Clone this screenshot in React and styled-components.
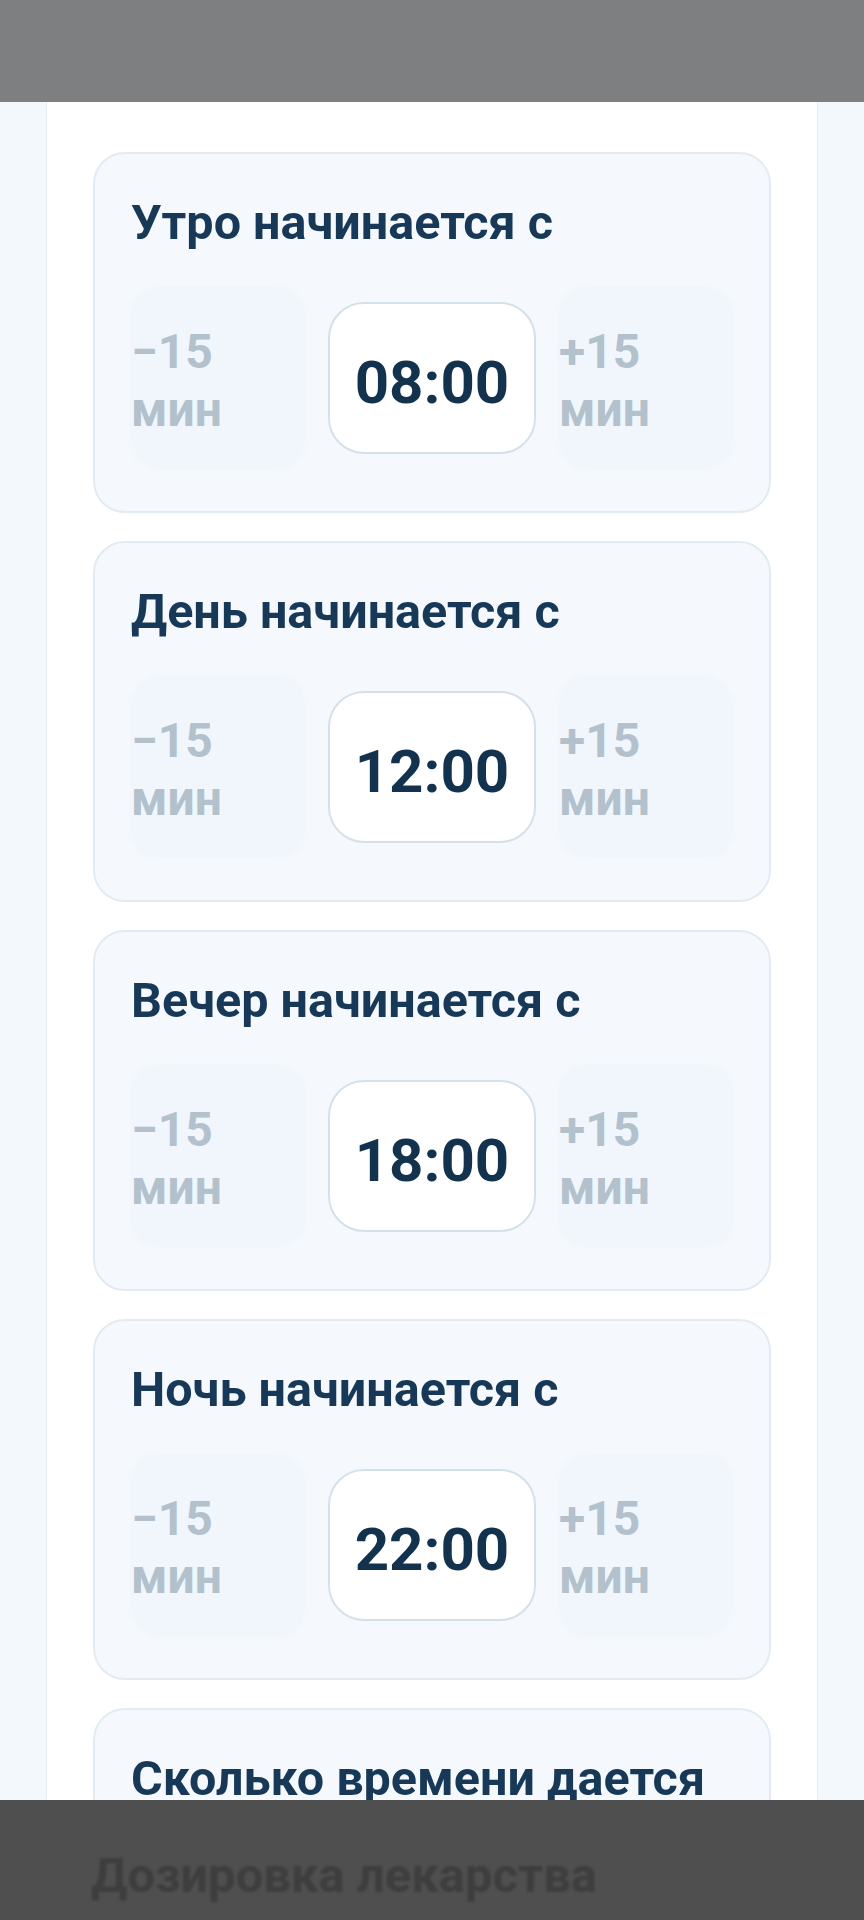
import React from "react";
import styled, { createGlobalStyle } from "styled-components";

const periods = [
  { label: "Утро начинается с", time: "08:00" },
  { label: "День начинается с", time: "12:00" },
  { label: "Вечер начинается с", time: "18:00" },
  { label: "Ночь начинается с", time: "22:00" },
];

function Stepper({ time }) {
  return (
    <StepRow>
      <StepButton type="button">
        −15
        <br />
        мин
      </StepButton>
      <TimeBox>{time}</TimeBox>
      <StepButton type="button">
        +15
        <br />
        мин
      </StepButton>
    </StepRow>
  );
}

export default function App() {
  return (
    <>
      <GlobalStyle />
      <Screen>
        <StatusShade />
        <Panel>
          {periods.map((period) => (
            <Card key={period.label}>
              <Title>{period.label}</Title>
              <Stepper time={period.time} />
            </Card>
          ))}
          <Card>
            <Title>Сколько времени дается</Title>
          </Card>
        </Panel>
        <BottomShade>
          <ShadeText>Дозировка лекарства</ShadeText>
        </BottomShade>
      </Screen>
    </>
  );
}

const GlobalStyle = createGlobalStyle`
  * {
    box-sizing: border-box;
  }
  body {
    margin: 0;
    background: #f3f8fd;
    font-family: Roboto, "Noto Sans", sans-serif;
  }
`;

const Screen = styled.div`
  position: relative;
  height: 100vh;
  display: flex;
  flex-direction: column;
  overflow: hidden;
`;

const StatusShade = styled.div`
  flex: 0 0 102px;
  background: #7e7f80;
`;

const Panel = styled.main`
  flex: 1;
  width: 772px;
  margin: 0 auto;
  padding: 50px 46px 0;
  display: flex;
  flex-direction: column;
  gap: 28px;
  background: #ffffff;
  border-left: 1px solid #e6edf4;
  border-right: 1px solid #e6edf4;
`;

const Card = styled.section`
  flex-shrink: 0;
  padding: 42px 36px;
  background: #f5f9fd;
  border: 2px solid #e3ebf2;
  border-radius: 32px;
`;

const Title = styled.h2`
  margin: 0;
  font-size: 48.5px;
  line-height: 54px;
  font-weight: 700;
  color: #173957;
  white-space: nowrap;
`;

const StepRow = styled.div`
  margin-top: 37px;
  display: grid;
  grid-template-columns: 1fr 208px 1fr;
  gap: 23px;
  align-items: center;
`;

const StepButton = styled.button`
  height: 182px;
  padding: 5px 0 0;
  border: none;
  border-radius: 28px;
  background: #f0f6fc;
  box-shadow: 0 0 6px 2px #f2f7fc;
  text-align: left;
  font-family: inherit;
  font-size: 48px;
  line-height: 58px;
  font-weight: 700;
  color: #b2c1cc;
  cursor: pointer;
`;

const TimeBox = styled.div`
  height: 152px;
  padding-top: 8px;
  display: flex;
  align-items: center;
  justify-content: center;
  background: #ffffff;
  border: 2px solid #d5e1ea;
  border-radius: 36px;
  font-size: 60px;
  font-weight: 700;
  color: #13324d;
`;

const BottomShade = styled.div`
  position: absolute;
  left: 0;
  right: 0;
  bottom: 0;
  height: 120px;
  padding: 49px 0 0 91px;
  background: #4f4f4f;
`;

const ShadeText = styled.div`
  font-size: 49px;
  line-height: 54px;
  font-weight: 700;
  color: #3e3e3e;
  filter: blur(0.8px);
`;
